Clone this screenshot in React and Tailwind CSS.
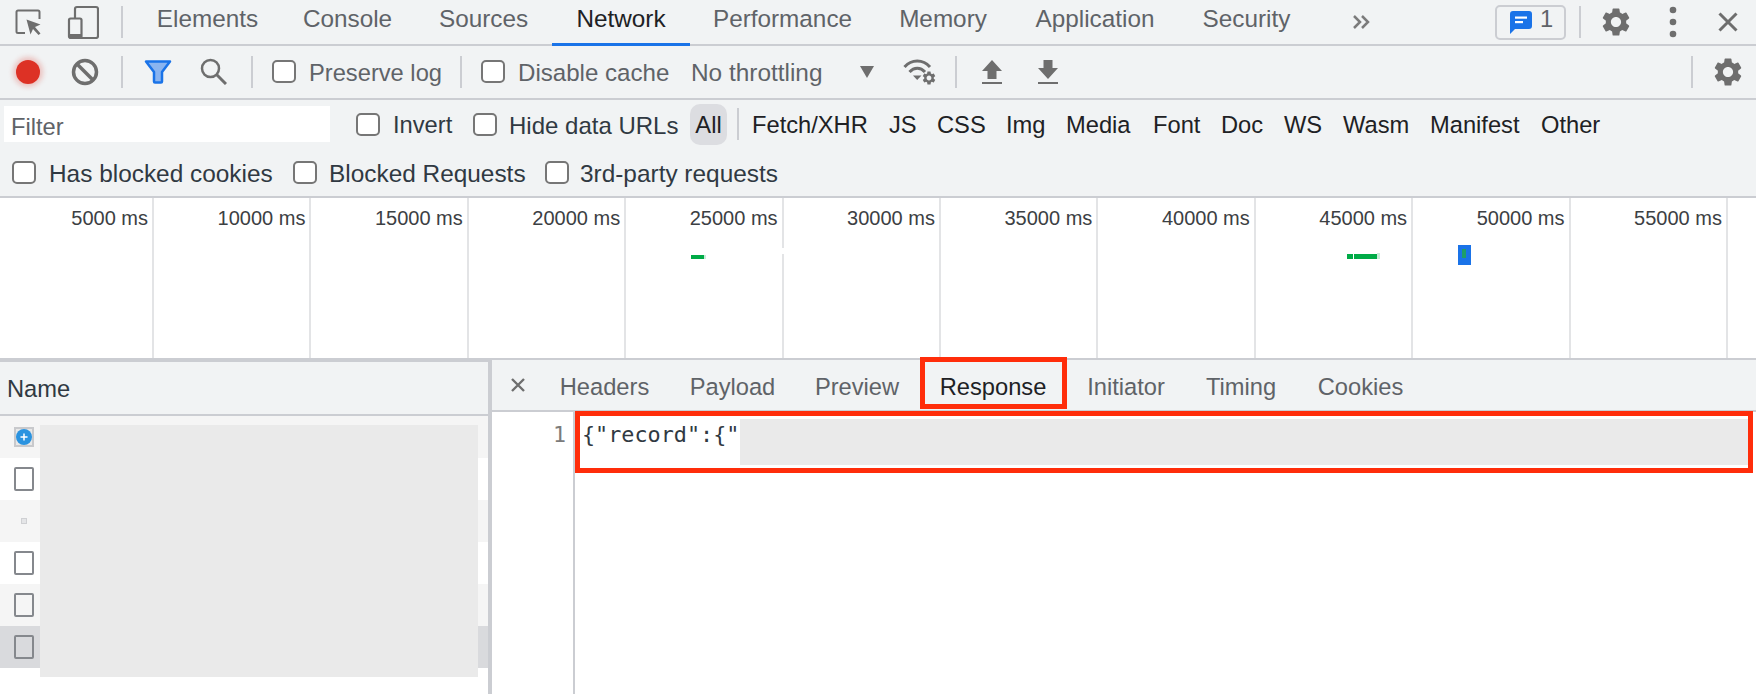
const MAIN_TABS = [
  { label: "Elements", width: "w-[145px]" },
  { label: "Console", width: "w-[135px]" },
  { label: "Sources", width: "w-[137px]" },
  { label: "Network", width: "w-[138px]", active: true },
  { label: "Performance", width: "w-[185px]" },
  { label: "Memory", width: "w-[136px]" },
  { label: "Application", width: "w-[168px]" },
  { label: "Security", width: "w-[135px]" },
];

const TYPE_FILTERS = [
  { label: "Fetch/XHR", cls: "ml-[13px] w-[117px]" },
  { label: "JS", cls: "ml-[20px] w-[28px]" },
  { label: "CSS", cls: "ml-[20px] w-[48px]" },
  { label: "Img", cls: "ml-[21px] w-[39px]" },
  { label: "Media", cls: "ml-[21px] w-[66px]" },
  { label: "Font", cls: "ml-[21px] w-[47px]" },
  { label: "Doc", cls: "ml-[21px] w-[43px]" },
  { label: "WS", cls: "ml-[20px] w-[37px]" },
  { label: "Wasm", cls: "ml-[22px] w-[65px]" },
  { label: "Manifest", cls: "ml-[22px] w-[90px]" },
  { label: "Other", cls: "ml-[21px] w-[60px]" },
];

const DETAIL_TABS = [
  { label: "Headers", width: "w-[131px]" },
  { label: "Payload", width: "w-[125px]" },
  { label: "Preview", width: "w-[124px]" },
  { label: "Response", width: "w-[148px]", active: true },
  { label: "Initiator", width: "w-[118px]" },
  { label: "Timing", width: "w-[112px]" },
  { label: "Cookies", width: "w-[127px]" },
];

const TICKS = [5000, 10000, 15000, 20000, 25000, 30000, 35000, 40000, 45000, 50000, 55000];

const ROWS = [
  { bg: "bg-[#f5f5f5]", icon: "xhr" },
  { bg: "bg-white", icon: "doc" },
  { bg: "bg-[#f5f5f5]", icon: "dot" },
  { bg: "bg-white", icon: "doc" },
  { bg: "bg-[#f5f5f5]", icon: "doc" },
  { bg: "bg-[#d9dadd]", icon: "doc" },
];

const GEAR =
  "M19.14 12.94c.04-.3.06-.61.06-.94 0-.32-.02-.64-.07-.94l2.03-1.58a.49.49 0 0 0 .12-.61l-1.92-3.32a.488.488 0 0 0-.59-.22l-2.39.96c-.5-.38-1.03-.7-1.62-.94l-.36-2.54a.484.484 0 0 0-.48-.41h-3.84c-.24 0-.43.17-.47.41l-.36 2.54c-.59.24-1.13.57-1.62.94l-2.39-.96c-.22-.08-.47 0-.59.22L2.74 8.87c-.12.21-.08.47.12.61l2.03 1.58c-.05.3-.09.63-.09.94s.02.64.07.94l-2.03 1.58a.49.49 0 0 0-.12.61l1.92 3.32c.12.22.37.29.59.22l2.39-.96c.5.38 1.03.7 1.62.94l.36 2.54c.05.24.24.41.48.41h3.84c.24 0 .44-.17.47-.41l.36-2.54c.59-.24 1.13-.56 1.62-.94l2.39.96c.22.08.47 0 .59-.22l1.92-3.32c.12-.22.07-.47-.12-.61l-2.01-1.58zM12 15.6c-1.98 0-3.6-1.62-3.6-3.6s1.62-3.6 3.6-3.6 3.6 1.62 3.6 3.6-1.62 3.6-3.6 3.6z";

function Gear({ className }) {
  return (
    <svg viewBox="0 0 24 24" className={className}>
      <path d={GEAR} fill="#6e6e6e" fillRule="evenodd" />
    </svg>
  );
}

function Sep({ className }) {
  return <div className={`w-[2px] shrink-0 bg-[#cbcdd2] ${className}`} />;
}

function Checkbox({ className }) {
  return <div className={`h-[23px] w-[24px] shrink-0 rounded-[5px] border-2 border-[#767676] bg-white ${className}`} />;
}

function InspectIcon() {
  return (
    <svg viewBox="0 0 26 26" className="ml-[15px] h-[26px] w-[26px] shrink-0">
      <path d="M10 24H3a1.5 1.5 0 0 1-1.5-1.5V3A1.5 1.5 0 0 1 3 1.5h20A1.5 1.5 0 0 1 24.500 3v7" fill="none" stroke="#6e6e6e" strokeWidth="2" />
      <path d="M11.500 10.500 25.500 15.500 20 18l5.500 6.500-2 1.500-5.500-6-2.500 5.500z" fill="#6e6e6e" />
    </svg>
  );
}

function DeviceIcon() {
  return (
    <svg viewBox="0 0 32 34" className="ml-[26px] h-[34px] w-[32px] shrink-0">
      <path d="M8 13V4a2 2 0 0 1 2-2h19a2 2 0 0 1 2 2v27a2 2 0 0 1-2 2H14" fill="none" stroke="#6e6e6e" strokeWidth="2.200" />
      <rect x="2" y="13.500" width="12.500" height="19.500" rx="1.500" fill="none" stroke="#6e6e6e" strokeWidth="2.200" />
      <rect x="2" y="29" width="12.500" height="4" fill="#6e6e6e" />
    </svg>
  );
}

function ClearIcon() {
  return (
    <svg viewBox="0 0 28 28" className="ml-[31px] h-[28px] w-[28px] shrink-0">
      <circle cx="14" cy="14" r="11.500" fill="none" stroke="#6e6e6e" strokeWidth="3.500" />
      <path d="M6 6 22 22" stroke="#6e6e6e" strokeWidth="3.500" />
    </svg>
  );
}

function FilterIcon() {
  return (
    <svg viewBox="0 0 28 24" className="ml-[21px] h-[24px] w-[28px] shrink-0">
      <path d="M2 1.500h24L18 12v9.500a1 1 0 0 1-1 1h-6a1 1 0 0 1-1-1V12z" fill="#8ab4f0" stroke="#1a73e8" strokeWidth="2.500" strokeLinejoin="round" />
    </svg>
  );
}

function SearchIcon() {
  return (
    <svg viewBox="0 0 27 27" className="ml-[28px] h-[27px] w-[27px] shrink-0">
      <circle cx="10.500" cy="10.500" r="8.500" fill="none" stroke="#6e6e6e" strokeWidth="2.500" />
      <path d="M16.500 16.500 26 26" stroke="#6e6e6e" strokeWidth="3" />
    </svg>
  );
}

function WifiIcon() {
  return (
    <svg viewBox="0 0 34 28" className="ml-[29px] h-[28px] w-[34px] shrink-0">
      <path d="M1.500 9C8.500 1 20 1 27 9" fill="none" stroke="#6e6e6e" strokeWidth="3" />
      <path d="M6.500 14c4.500-5 11-5 15.500 0" fill="none" stroke="#6e6e6e" strokeWidth="3" />
      <path d="M10 17.500h8.500L14.200 22z" fill="#6e6e6e" />
      <svg x="18" y="12" width="16" height="16" viewBox="0 0 24 24">
        <path d={GEAR} fill="#6e6e6e" fillRule="evenodd" />
      </svg>
    </svg>
  );
}

function TransferIcon({ up, className }) {
  return (
    <svg viewBox="0 0 20 24" className={`h-[24px] w-[20px] shrink-0 ${className}`}>
      {up ? (
        <path d="M10 0 20 11h-5.500v8h-9v-8H0z" fill="#6e6e6e" />
      ) : (
        <path d="M5.500 0h9v8H20L10 19 0 8h5.500z" fill="#6e6e6e" />
      )}
      <rect x="0" y="22" width="20" height="2" fill="#6e6e6e" />
    </svg>
  );
}

function MainToolbar() {
  return (
    <div className="flex h-[46px] items-center border-b-2 border-[#cbcdd2]">
      <InspectIcon />
      <DeviceIcon />
      <Sep className="ml-[22px] h-[32px]" />
      <div className="ml-[12px] flex h-full text-[24.3px]">
        {MAIN_TABS.map((tab) => (
          <div
            key={tab.label}
            className={`${tab.width} -mb-[2px] flex items-center justify-center whitespace-nowrap ${
              tab.active ? "border-b-[3px] border-[#1a73e8] pb-[4px] text-[#202124]" : "pb-[7px] text-[#5f6368]"
            }`}
          >
            {tab.label}
          </div>
        ))}
      </div>
      <svg viewBox="0 0 18 16" className="ml-[38px] h-[16px] w-[18px] shrink-0">
        <path d="M2 2l6 6-6 6M10 2l6 6-6 6" fill="none" stroke="#7b7b7b" strokeWidth="2.500" />
      </svg>
      <div className="ml-[125px] flex h-[35px] w-[71px] shrink-0 items-center rounded-[5px] border-2 border-[#cbcdd2]">
        <svg viewBox="0 0 22 23" className="ml-[13px] h-[23px] w-[22px] shrink-0">
          <path d="M3 0h16a3 3 0 0 1 3 3v12a3 3 0 0 1-3 3H5l-5 5V3a3 3 0 0 1 3-3z" fill="#1a73e8" />
          <rect x="5" y="5.500" width="12" height="2.200" fill="#fff" />
          <rect x="5" y="10" width="8" height="2.200" fill="#fff" />
        </svg>
        <span className="ml-[8px] pb-[4px] text-[#5f6368]">1</span>
      </div>
      <Sep className="ml-[13px] h-[32px]" />
      <Gear className="ml-[18px] h-[34px] w-[34px] shrink-0" />
      <svg viewBox="0 0 8 32" className="ml-[36px] h-[32px] w-[8px] shrink-0">
        <circle cx="4" cy="4" r="3.300" fill="#6e6e6e" />
        <circle cx="4" cy="16" r="3.300" fill="#6e6e6e" />
        <circle cx="4" cy="28" r="3.300" fill="#6e6e6e" />
      </svg>
      <svg viewBox="0 0 20 20" className="ml-[41px] h-[20px] w-[20px] shrink-0">
        <path d="M1.500 1.500l17 17M18.500 1.500l-17 17" stroke="#6e6e6e" strokeWidth="3" />
      </svg>
    </div>
  );
}

function NetworkToolbar() {
  return (
    <div className="flex h-[54px] items-center border-b-2 border-[#cbcdd2] pb-[1px]">
      <div className="ml-[16px] h-[24px] w-[24px] shrink-0 rounded-full bg-[#dd3125] shadow-[0_0_5px_3px_rgba(221,49,37,0.25)]" />
      <ClearIcon />
      <Sep className="ml-[22px] h-[32px]" />
      <FilterIcon />
      <SearchIcon />
      <Sep className="ml-[24px] h-[32px]" />
      <Checkbox className="ml-[19px]" />
      <span className="ml-[13px] w-[132px] whitespace-nowrap pt-[4px] text-[#5f6368]">Preserve log</span>
      <Sep className="ml-[19px] h-[32px]" />
      <Checkbox className="ml-[19px]" />
      <span className="ml-[13px] w-[150px] whitespace-nowrap pt-[4px] text-[24.1px] text-[#5f6368]">Disable cache</span>
      <span className="ml-[23px] w-[131px] whitespace-nowrap pt-[4px] text-[24.4px] text-[#5f6368]">No throttling</span>
      <svg viewBox="0 0 14 12" className="ml-[38px] h-[12px] w-[14px] shrink-0">
        <path d="M0 0h14L7 12z" fill="#6e6e6e" />
      </svg>
      <WifiIcon />
      <Sep className="ml-[18px] h-[32px]" />
      <TransferIcon up className="ml-[25px]" />
      <TransferIcon className="ml-[36px]" />
      <Sep className="ml-auto h-[32px]" />
      <Gear className="ml-[18px] mr-[11px] h-[34px] w-[34px] shrink-0" />
    </div>
  );
}

function FilterBar() {
  return (
    <div className="h-[98px] border-b-2 border-[#cbcdd2]">
      <div className="flex h-[48px] items-center text-[#202124]">
        <div className="ml-[4px] flex h-[36px] w-[326px] shrink-0 items-center bg-white pl-[7px] pt-[7px] text-[#5f6368]">Filter</div>
        <Checkbox className="ml-[26px]" />
        <span className="ml-[13px] w-[59px] whitespace-nowrap pt-[4px] text-[#303942]">Invert</span>
        <Checkbox className="ml-[21px]" />
        <span className="ml-[12px] w-[168px] whitespace-nowrap pt-[4px] text-[24px] text-[#303942]">Hide data URLs</span>
        <div className="ml-[13px] flex h-[41px] w-[37px] shrink-0 items-center justify-center rounded-[10px] bg-[#dcdde1] pt-[4px]">All</div>
        <Sep className="ml-[10px] h-[32px]" />
        {TYPE_FILTERS.map((item) => (
          <span key={item.label} className={`${item.cls} whitespace-nowrap pt-[4px]`}>
            {item.label}
          </span>
        ))}
      </div>
      <div className="flex h-[48px] items-center text-[24.4px] text-[#303942]">
        <Checkbox className="ml-[12px]" />
        <span className="ml-[13px] w-[223px] whitespace-nowrap pt-[4px]">Has blocked cookies</span>
        <Checkbox className="ml-[21px]" />
        <span className="ml-[12px] w-[194px] whitespace-nowrap pt-[4px]">Blocked Requests</span>
        <Checkbox className="ml-[22px]" />
        <span className="ml-[11px] w-[198px] whitespace-nowrap pt-[4px]">3rd-party requests</span>
      </div>
    </div>
  );
}

function Timeline() {
  return (
    <div className="relative grid h-[160px] grid-cols-[154px_repeat(10,157.4px)_1fr] bg-white">
      {TICKS.map((tick) => (
        <div key={tick} className="border-r-2 border-[#e3e4e6] pr-[4px] pt-[8px] text-right text-[20px] leading-[24px] text-[#3c4043]">
          {tick} ms
        </div>
      ))}
      <div />
      <div className="absolute left-[691px] top-[57px] h-[4px] w-[13px] bg-[#00ab47]" />
      <div className="absolute left-[704px] top-[57px] h-[4px] w-[2px] bg-[#c8ecd8]" />
      <div className="absolute left-[781px] top-[50px] h-[6px] w-[3px] bg-white" />
      <div className="absolute left-[1347px] top-[56px] h-[5px] w-[6px] bg-[#00ab47]" />
      <div className="absolute left-[1354px] top-[56px] h-[5px] w-[23px] bg-[#00ab47]" />
      <div className="absolute left-[1377px] top-[55px] h-[6px] w-[3px] bg-[#c8ecd8]" />
      <div className="absolute left-[1458px] top-[47px] h-[20px] w-[13px] bg-[#1a73e8]" />
      <div className="absolute left-[1462px] top-[51px] h-[9px] w-[4px] bg-[#1e9e6a]" />
    </div>
  );
}

function RowIcon({ type }) {
  if (type === "xhr") {
    return (
      <div className="ml-[14px] flex h-[20px] w-[20px] items-center justify-center border-2 border-[#c8c9cc] bg-[#e8e8e8]">
        <svg viewBox="0 0 16 16" className="h-[16px] w-[16px]">
          <circle cx="8" cy="8" r="8" fill="#2a93e0" />
          <path d="M4.500 8h7M8 4.500v7" stroke="#fff" strokeWidth="1.500" />
        </svg>
      </div>
    );
  }
  if (type === "dot") {
    return <div className="ml-[21px] h-[6px] w-[6px] border border-[#cfd0d3] bg-[#e4e5e7]" />;
  }
  return <div className="ml-[14px] h-[24px] w-[20px] rounded-[2px] border-2 border-[#85888d]" />;
}

function RequestList() {
  return (
    <div className="relative h-full w-[492px] shrink-0 border-r-4 border-t-2 border-[#cbcdd2] bg-white">
      <div className="flex h-[54px] items-center border-b-2 border-[#cbcdd2] bg-[#f1f3f4] pl-[7px] pt-[4px] text-[#303942]">Name</div>
      {ROWS.map((row, i) => (
        <div key={i} className={`flex h-[42px] items-center ${row.bg}`}>
          <RowIcon type={row.icon} />
        </div>
      ))}
      <div className="absolute left-[40px] top-[63px] h-[252px] w-[438px] bg-[#eaeaea]" />
    </div>
  );
}

function DetailPane() {
  return (
    <div className="flex h-full flex-1 flex-col bg-white">
      <div className="flex h-[52px] shrink-0 items-center border-b-2 border-[#cbcdd2] bg-[#f1f3f4]">
        <svg viewBox="0 0 14 14" className="ml-[19px] h-[14px] w-[14px] shrink-0">
          <path d="M1 1l12 12M13 1 1 13" stroke="#6e6e6e" strokeWidth="2.400" />
        </svg>
        <div className="ml-[14px] flex pt-[6px]">
          {DETAIL_TABS.map((tab) => (
            <div
              key={tab.label}
              className={`${tab.width} whitespace-nowrap text-center ${tab.active ? "text-[#202124]" : "text-[#5f6368]"}`}
            >
              {tab.label}
            </div>
          ))}
        </div>
      </div>
      <div className="flex flex-1">
        <div className="w-[83px] shrink-0 border-r-2 border-[#cbcdd2] pr-[7px] pt-[8px] text-right font-['DejaVu_Sans_Mono',monospace] text-[21.6px] leading-[30px] text-[#7b7b7b]">
          1
        </div>
        <div className="pl-[7px] pt-[8px] font-['DejaVu_Sans_Mono',monospace] text-[21.8px] leading-[30px] text-[#303942]">
          {'{"record":{"'}
        </div>
      </div>
    </div>
  );
}

export default function App() {
  return (
    <div className="relative h-[694px] w-[1756px] overflow-hidden bg-[#f1f3f4] font-['Liberation_Sans',Arial,sans-serif] text-[23.7px]">
      <MainToolbar />
      <NetworkToolbar />
      <FilterBar />
      <Timeline />
      <div className="flex h-[336px] border-t-2 border-[#cbcdd2]">
        <RequestList />
        <DetailPane />
      </div>
      {/* annotations drawn over the screenshot */}
      <div className="absolute left-[740px] top-[419px] h-[46px] w-[1008px] bg-[#eaeaea]" />
      <div className="absolute left-[920px] top-[357px] h-[52px] w-[147px] border-[5px] border-[#ff2d0a]" />
      <div className="absolute left-[575px] top-[411px] h-[62px] w-[1178px] border-[5px] border-[#ff2d0a]" />
    </div>
  );
}
